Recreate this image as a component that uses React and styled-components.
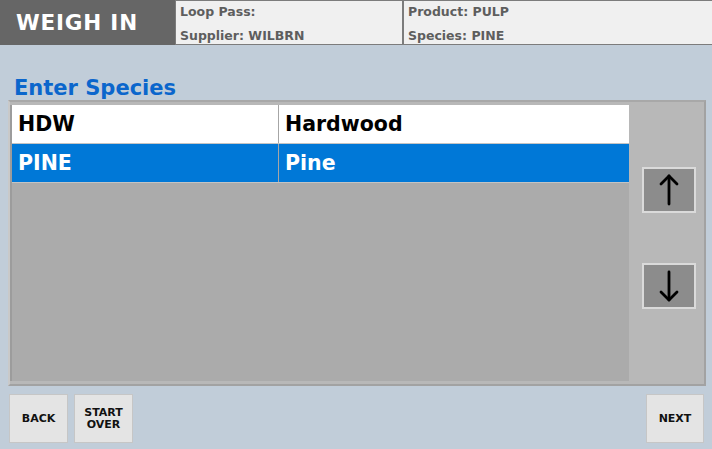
import styled, { createGlobalStyle } from 'styled-components'

const GlobalStyle = createGlobalStyle`
  html, body {
    margin: 0;
    padding: 0;
    background: #c1cdd9;
  }

  body {
    font-family: "DejaVu Sans", "Liberation Sans", sans-serif;
    font-weight: bold;
  }
`

const Screen = styled.div`
  width: 712px;
  height: 449px;
  background: #c1cdd9;
  display: flex;
  flex-direction: column;
  overflow: hidden;
`

const TopBar = styled.header`
  display: flex;
  height: 45px;
`

const Title = styled.div`
  width: 175px;
  flex: none;
  background: #666666;
  color: #ffffff;
  font-size: 21.5px;
  letter-spacing: 0.8px;
  line-height: 45px;
  padding-left: 16px;
  box-sizing: border-box;
`

const InfoCell = styled.div`
  flex: ${({ $grow }) => $grow};
  display: flex;
  flex-direction: column;
  gap: 8px;
  padding: 3px 4px 0;
  background: #f0f0f0;
  border: 1px solid #7c7c7c;
  border-left-width: ${({ $first }) => ($first ? '1px' : '2px')};
  border-right: none;
  color: #5e5e5e;
  font-size: 12.5px;
  line-height: 16px;
  box-sizing: border-box;
  white-space: nowrap;
`

const SectionTitle = styled.h2`
  margin: 31px 0 0 14px;
  color: #0b66cc;
  font-size: 21px;
  line-height: 24px;
`

const Panel = styled.section`
  display: flex;
  height: 286px;
  margin: 0 6px 0 8px;
  border: 2px solid #a2a2a2;
  border-left-color: #c9c9c9;
  border-top-color: #a8a8a8;
  background: #b8b8b8;
  box-sizing: border-box;
`

const List = styled.div`
  flex: 1;
  margin: 3px 0 3px 0;
  border-left: 2px solid #9c9c9c;
  background: #ababab;
`

const Row = styled.div`
  display: grid;
  grid-template-columns: 266px 1fr;
  height: 38px;
  background: ${({ $selected }) => ($selected ? '#0078d7' : '#ffffff')};
  color: ${({ $selected }) => ($selected ? '#ffffff' : '#000000')};
  border-bottom: 1px solid #c4c4c4;
  font-size: 20.5px;
  line-height: 38px;
`

const Cell = styled.div`
  padding-left: 6px;
  border-left: ${({ $divider }) => ($divider ? '1px solid #a6a6a6' : 'none')};
  white-space: nowrap;
  overflow: hidden;
`

const ScrollColumn = styled.div`
  width: 75px;
  flex: none;
  display: flex;
  flex-direction: column;
  align-items: center;
  gap: 50px;
  padding: 65px 0 0 4px;
  box-sizing: border-box;
`

const ScrollButton = styled.button`
  width: 54px;
  height: 46px;
  padding: 0;
  display: flex;
  align-items: center;
  justify-content: center;
  background: #8c8c8c;
  border: 2px solid #dadada;
  box-sizing: border-box;
`

const Footer = styled.footer`
  display: flex;
  gap: 6px;
  margin: 8px 8px 0 9px;
`

const ActionButton = styled.button`
  width: ${({ $width }) => $width || 59}px;
  height: 49px;
  margin-left: ${({ $push }) => ($push ? 'auto' : '0')};
  padding: 0;
  background: #e4e4e4;
  border: 1px solid #c6c6c6;
  color: #111111;
  font-family: "DejaVu Sans", "Liberation Sans", sans-serif;
  font-weight: bold;
  font-size: 11px;
  line-height: 12px;
  box-sizing: border-box;
`

const Arrow = ({ down }) => (
  <svg width="24" height="34" viewBox="0 0 24 34" fill="none" stroke="#000" strokeWidth="2.8" strokeLinecap="round" strokeLinejoin="round">
    {down ? (
      <>
        <path d="M12 3v28" />
        <path d="M4 23l8 8 8-8" />
      </>
    ) : (
      <>
        <path d="M12 31V3" />
        <path d="M4 11l8-8 8 8" />
      </>
    )}
  </svg>
)

const species = [
  { code: 'HDW', name: 'Hardwood' },
  { code: 'PINE', name: 'Pine' },
]

const App = () => {
  const selected = 'PINE'

  return (
    <>
      <GlobalStyle />
      <Screen>
        <TopBar>
          <Title>WEIGH IN</Title>
          <InfoCell $grow="226" $first>
            <div>Loop Pass:</div>
            <div>Supplier: WILBRN</div>
          </InfoCell>
          <InfoCell $grow="311">
            <div>Product: PULP</div>
            <div>Species: PINE</div>
          </InfoCell>
        </TopBar>

        <SectionTitle>Enter Species</SectionTitle>

        <Panel>
          <List>
            {species.map((item) => (
              <Row key={item.code} $selected={item.code === selected}>
                <Cell>{item.code}</Cell>
                <Cell $divider>{item.name}</Cell>
              </Row>
            ))}
          </List>
          <ScrollColumn>
            <ScrollButton aria-label="Scroll up"><Arrow /></ScrollButton>
            <ScrollButton aria-label="Scroll down"><Arrow down /></ScrollButton>
          </ScrollColumn>
        </Panel>

        <Footer>
          <ActionButton>BACK</ActionButton>
          <ActionButton>START<br />OVER</ActionButton>
          <ActionButton $push $width={58}>NEXT</ActionButton>
        </Footer>
      </Screen>
    </>
  )
}

export default App
